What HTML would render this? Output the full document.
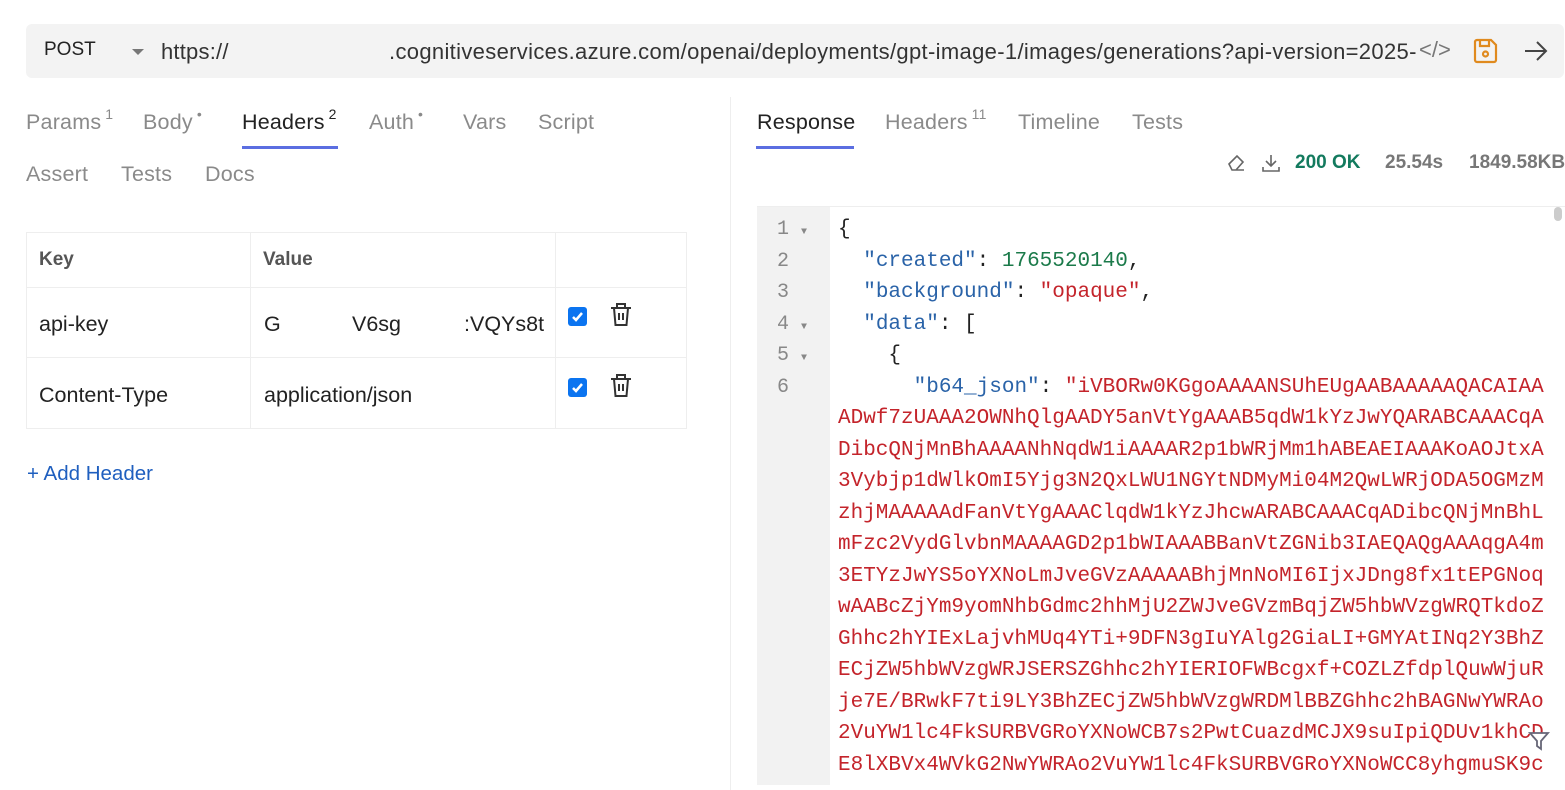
<!DOCTYPE html>
<html><head><meta charset="utf-8"><style>
*{margin:0;padding:0;box-sizing:border-box}
body{width:1565px;height:790px;background:#fff;font-family:"Liberation Sans",sans-serif;position:relative;overflow:hidden;color:#333}
.a{position:absolute;white-space:nowrap}
.tab{font-size:21.5px;color:#8a8a8a;letter-spacing:0.2px}
.tab sup{font-size:14px;vertical-align:top;position:relative;top:-4px;margin-left:4px}
.code{position:absolute;left:838px;top:214px;font-family:"Liberation Mono",monospace;font-size:21px;line-height:31.5px;color:#222;white-space:pre}
.k{color:#2a63a8}.n{color:#1b7a4a}.s{color:#c4242b}
.gut{position:absolute;left:757px;top:207px;width:73px;height:578px;background:#f2f2f2}
.ln{position:absolute;left:777px;font-family:"Liberation Mono",monospace;font-size:20px;color:#888}
.cell{position:absolute;border:1px solid #eee}
</style></head><body>
<div class="a" style="left:26px;top:24px;width:1538px;height:54px;background:#f3f3f3;border-radius:6px"></div>
<div class="a" style="left:44px;top:39px;font-size:19px;color:#222">POST</div>
<div class="a" style="left:132px;top:49px;width:0;height:0;border-left:6px solid transparent;border-right:6px solid transparent;border-top:6px solid #777"></div>
<div class="a" style="left:161px;top:39px;font-size:22px;color:#333;letter-spacing:0.2px">https://</div>
<div class="a" style="left:389px;top:39px;font-size:22px;color:#333;letter-spacing:0.33px">.cognitiveservices.azure.com/openai/deployments/gpt-image-1/images/generations?api-version=2025-</div>
<div class="a" style="left:1419px;top:37px;font-size:22px;color:#777;background:#f3f3f3">&lt;/&gt;</div>
<svg class="a" style="left:1472px;top:37px" width="27" height="28" viewBox="0 0 27 28" fill="none" stroke="#e08a1e" stroke-width="2.2"><path d="M3 5a2 2 0 0 1 2-2h14l5 5v15a2 2 0 0 1-2 2H5a2 2 0 0 1-2-2z"/><path d="M8 3v6h9V3"/><circle cx="13.5" cy="17" r="2.5"/></svg>
<svg class="a" style="left:1523px;top:40px" width="26" height="22" viewBox="0 0 26 22" fill="none" stroke="#444" stroke-width="2"><path d="M2 11h21M14 2l9 9-9 9"/></svg>

<div class="a tab" style="left:26px;top:110px">Params<sup>1</sup></div>
<div class="a tab" style="left:143px;top:110px">Body<sup>•</sup></div>
<div class="a tab" style="left:242px;top:110px;color:#222">Headers<sup>2</sup></div>
<div class="a" style="left:242px;top:146px;width:96px;height:3px;background:#5b6ee1"></div>
<div class="a tab" style="left:369px;top:110px">Auth<sup>•</sup></div>
<div class="a tab" style="left:463px;top:110px">Vars</div>
<div class="a tab" style="left:538px;top:110px">Script</div>
<div class="a tab" style="left:26px;top:162px">Assert</div>
<div class="a tab" style="left:121px;top:162px">Tests</div>
<div class="a tab" style="left:205px;top:162px">Docs</div>

<div class="cell" style="left:26px;top:232px;width:661px;height:197px"></div>
<div class="a" style="left:26px;top:287px;width:661px;height:1px;background:#eee"></div>
<div class="a" style="left:26px;top:357px;width:661px;height:1px;background:#eee"></div>
<div class="a" style="left:250px;top:232px;width:1px;height:197px;background:#eee"></div>
<div class="a" style="left:555px;top:232px;width:1px;height:197px;background:#eee"></div>
<div class="a" style="left:39px;top:249px;font-size:19px;font-weight:bold;color:#555">Key</div>
<div class="a" style="left:263px;top:249px;font-size:19px;font-weight:bold;color:#555">Value</div>
<div class="a" style="left:39px;top:312px;font-size:21.5px;color:#222">api-key</div>
<div class="a" style="left:264px;top:312px;font-size:21.5px;color:#222">G</div>
<div class="a" style="left:352px;top:312px;font-size:21.5px;color:#222">V6sg</div>
<div class="a" style="left:464px;top:312px;font-size:21.5px;color:#222">:VQYs8t</div>
<div class="a" style="left:39px;top:383px;font-size:21.5px;color:#222">Content-Type</div>
<div class="a" style="left:264px;top:383px;font-size:21.5px;color:#222">application/json</div>
<svg class="a" style="left:568px;top:307px" width="19" height="19"><rect width="19" height="19" rx="3" fill="#0b74f0"/><path d="M5 10l3 3 6-7" stroke="#fff" stroke-width="2.5" fill="none"/></svg>
<svg class="a" style="left:568px;top:378px" width="19" height="19"><rect width="19" height="19" rx="3" fill="#0b74f0"/><path d="M5 10l3 3 6-7" stroke="#fff" stroke-width="2.5" fill="none"/></svg>
<svg class="a" style="left:609px;top:302px" width="24" height="26" viewBox="0 0 24 26" fill="none" stroke="#333" stroke-width="2"><path d="M2 6h20M8 6V2h8v4M5 6l1.5 17h11L19 6M10 11v7M14 11v7"/></svg>
<svg class="a" style="left:609px;top:373px" width="24" height="26" viewBox="0 0 24 26" fill="none" stroke="#333" stroke-width="2"><path d="M2 6h20M8 6V2h8v4M5 6l1.5 17h11L19 6M10 11v7M14 11v7"/></svg>
<div class="a" style="left:27px;top:462px;font-size:20.5px;color:#1f5fbf">+ Add Header</div>

<div class="a" style="left:730px;top:97px;width:1px;height:693px;background:#eee"></div>

<div class="a tab" style="left:757px;top:110px;color:#222">Response</div>
<div class="a" style="left:756px;top:146px;width:98px;height:3px;background:#5b6ee1"></div>
<div class="a tab" style="left:885px;top:110px">Headers<sup>11</sup></div>
<div class="a tab" style="left:1018px;top:110px">Timeline</div>
<div class="a tab" style="left:1132px;top:110px">Tests</div>
<svg class="a" style="left:1226px;top:154px" width="20" height="18" viewBox="0 0 20 18" fill="none" stroke="#666" stroke-width="1.6"><path d="M8 16h10M3 10l8-8 6 6-7 8H6z"/></svg>
<svg class="a" style="left:1261px;top:153px" width="20" height="20" viewBox="0 0 20 20" fill="none" stroke="#666" stroke-width="1.6"><path d="M10 2v11M5 8l5 5 5-5M2 14v4h16v-4"/></svg>
<div class="a" style="left:1295px;top:152px;font-size:19px;font-weight:bold;color:#137a5e">200 OK</div>
<div class="a" style="left:1385px;top:152px;font-size:19px;font-weight:bold;color:#777">25.54s</div>
<div class="a" style="left:1469px;top:152px;font-size:19px;font-weight:bold;color:#777">1849.58KB</div>

<div class="a" style="left:757px;top:206px;width:808px;height:1px;background:#eee"></div>
<div class="gut"></div>
<div class="a" style="left:1554px;top:207px;width:8px;height:14px;background:#ccc;border-radius:4px"></div>
<div class="ln" style="top:218px">1 <span style="font-size:10px">▼</span></div>
<div class="ln" style="top:250px">2</div>
<div class="ln" style="top:281px">3</div>
<div class="ln" style="top:313px">4 <span style="font-size:10px">▼</span></div>
<div class="ln" style="top:344px">5 <span style="font-size:10px">▼</span></div>
<div class="ln" style="top:376px">6</div>
<div class="code">{
  <span class="k">"created"</span>: <span class="n">1765520140</span>,
  <span class="k">"background"</span>: <span class="s">"opaque"</span>,
  <span class="k">"data"</span>: [
    {
      <span class="k">"b64_json"</span>: <span class="s">"iVBORw0KGgoAAAANSUhEUgAABAAAAAQACAIAA
ADwf7zUAAA2OWNhQlgAADY5anVtYgAAAB5qdW1kYzJwYQARABCAAACqA
DibcQNjMnBhAAAANhNqdW1iAAAAR2p1bWRjMm1hABEAEIAAAKoAOJtxA
3Vybjp1dWlkOmI5Yjg3N2QxLWU1NGYtNDMyMi04M2QwLWRjODA5OGMzM
zhjMAAAAAdFanVtYgAAAClqdW1kYzJhcwARABCAAACqADibcQNjMnBhL
mFzc2VydGlvbnMAAAAGD2p1bWIAAABBanVtZGNib3IAEQAQgAAAqgA4m
3ETYzJwYS5oYXNoLmJveGVzAAAAABhjMnNoMI6IjxJDng8fx1tEPGNoq
wAABcZjYm9yomNhbGdmc2hhMjU2ZWJveGVzmBqjZW5hbWVzgWRQTkdoZ
Ghhc2hYIExLajvhMUq4YTi+9DFN3gIuYAlg2GiaLI+GMYAtINq2Y3BhZ
ECjZW5hbWVzgWRJSERSZGhhc2hYIERIOFWBcgxf+COZLZfdplQuwWjuR
je7E/BRwkF7ti9LY3BhZECjZW5hbWVzgWRDMlBBZGhhc2hBAGNwYWRAo
2VuYW1lc4FkSURBVGRoYXNoWCB7s2PwtCuazdMCJX9suIpiQDUv1khCD
E8lXBVx4WVkG2NwYWRAo2VuYW1lc4FkSURBVGRoYXNoWCC8yhgmuSK9c</span></div>
<svg class="a" style="left:1528px;top:730px" width="22" height="22" viewBox="0 0 22 22" fill="#fff" stroke="#667" stroke-width="1.8"><path d="M2 3h18l-7 8v8l-4-3v-5z"/></svg>
</body></html>
